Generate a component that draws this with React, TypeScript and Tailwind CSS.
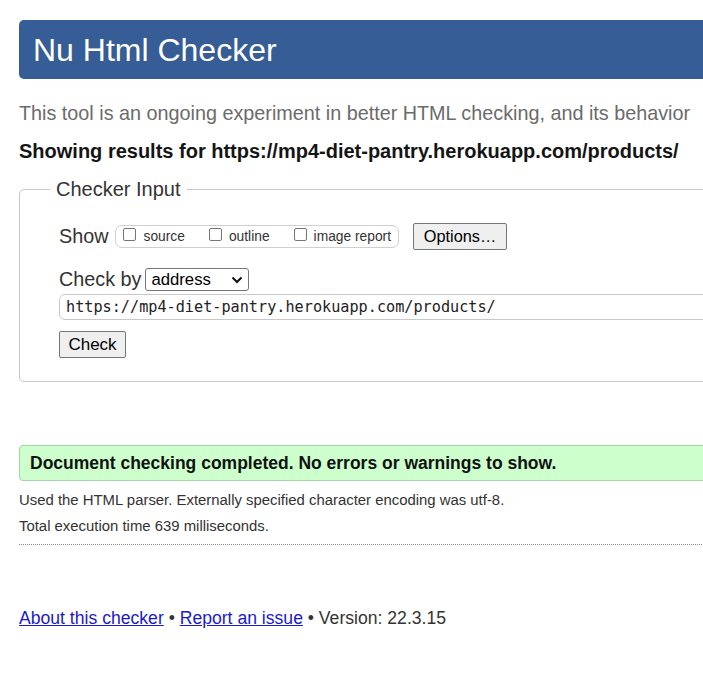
function CheckOption({ label }: { label: string }) {
  return (
    <label className="flex items-baseline gap-[7px]">
      <span className="w-[13px] h-[13px] border border-[#767676] rounded-[2px] bg-white" />
      <span>{label}</span>
    </label>
  );
}

export default function App() {
  return (
    <div className="w-[703px] h-[680px] overflow-hidden bg-white font-['Liberation_Sans',Arial,sans-serif] text-[#333]">
      <div className="w-[980px] pl-[19px] pt-[20px]">
        {/* Title bar */}
        <header className="h-[59px] bg-[#365d95] rounded-l-[5px] flex items-center pl-[14px]">
          <h1 className="text-[32px] leading-none text-white">Nu Html Checker</h1>
        </header>

        <p className="mt-[23px] text-[19.8px] leading-[23px] text-[#6b6b6b] whitespace-nowrap">
          This tool is an ongoing experiment in better HTML checking, and its behavior
        </p>
        <p className="mt-[15px] text-[20px] leading-[23px] font-bold text-[#151515] whitespace-nowrap">
          Showing results for https://mp4-diet-pantry.herokuapp.com/products/
        </p>

        {/* Checker input */}
        <fieldset className="mt-[15px] border border-[#c8c8c8] rounded-[5px] pl-[30px] pt-[22px] pb-[23px]">
          <legend className="px-[6px] text-[20px] leading-[23px] text-[#333]">Checker Input</legend>
          <div className="pl-[9px]">
            <div className="flex items-center h-[27px]">
              <span className="text-[19.8px] leading-[23px]">Show</span>
              <div className="ml-[7px] h-[23px] border border-[#cfcfcf] rounded-[7px] px-[7px] flex items-center gap-[24px] text-[13.8px] leading-[17px] text-[#333]">
                <CheckOption label="source" />
                <CheckOption label="outline" />
                <CheckOption label="image report" />
              </div>
              <button className="ml-[14px] w-[94px] h-[27px] border border-[#767676] rounded-[2px] bg-[#efefef] text-[16.3px] text-black flex items-center justify-center">
                Options…
              </button>
            </div>

            <div className="mt-[18px] flex items-center h-[23px]">
              <span className="text-[19.8px] leading-[23px]">Check by</span>
              <div className="ml-[4px] w-[104px] h-[23px] border border-[#767676] rounded-[3px] pl-[5px] pr-[5px] flex items-center justify-between text-[16.7px] text-black">
                <span>address</span>
                <svg width="12" height="8" viewBox="0 0 12 8" fill="none">
                  <polyline points="1.5,1.5 6,6 10.5,1.5" stroke="#111" strokeWidth="2" />
                </svg>
              </div>
            </div>

            <div className="mt-[3px] h-[26px] border border-[#c8c8c8] rounded-[6px] pl-[6px] flex items-center font-['DejaVu_Sans_Mono',monospace] text-[15.2px] text-[#222]">
              https://mp4-diet-pantry.herokuapp.com/products/
            </div>

            <button className="mt-[11px] w-[67px] h-[27px] border border-[#767676] rounded-[2px] bg-[#efefef] text-[17px] text-black flex items-center justify-center">
              Check
            </button>
          </div>
        </fieldset>

        {/* Result */}
        <div className="mt-[63px] h-[36px] border border-[#a9d3a9] bg-[#ccffcc] rounded-l-[4px] flex items-center pl-[10px] text-[17.5px] font-bold text-[#111]">
          Document checking completed. No errors or warnings to show.
        </div>

        <div className="mt-[7px] pb-[5px] border-b border-dotted border-[#888] text-[14.9px] leading-[25.7px] text-[#333]">
          <p>Used the HTML parser. Externally specified character encoding was utf-8.</p>
          <p>Total execution time 639 milliseconds.</p>
        </div>

        <p className="mt-[60px] text-[17.6px] text-[#333]">
          <a href="#" className="text-[#1a1acc] underline">About this checker</a>
          {' • '}
          <a href="#" className="text-[#1a1acc] underline">Report an issue</a>
          {' • Version: 22.3.15'}
        </p>
      </div>
    </div>
  );
}
